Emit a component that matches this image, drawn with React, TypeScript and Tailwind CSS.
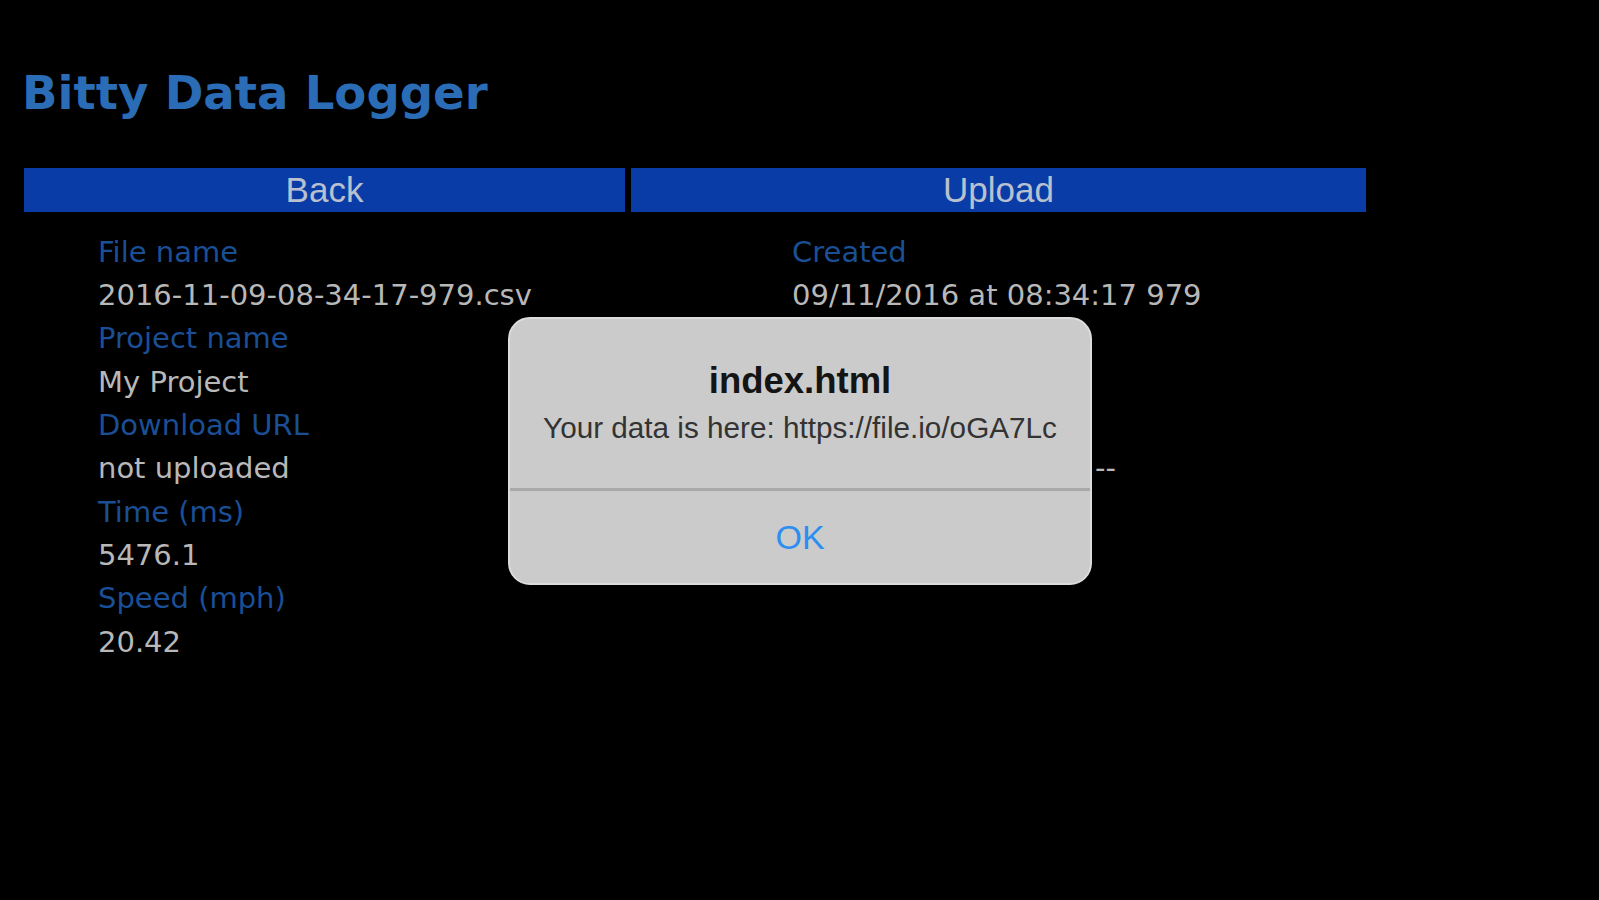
import React from "react";

const sans = { fontFamily: '"DejaVu Sans", Verdana, sans-serif' };

function Label({ children }: { children: React.ReactNode }) {
  return <div className="text-[#1a4f95] h-[43.35px] leading-[43.35px] whitespace-nowrap">{children}</div>;
}
function Value({ children }: { children: React.ReactNode }) {
  return <div className="text-[#b8b8b8] h-[43.35px] leading-[43.35px] whitespace-nowrap">{children}</div>;
}

export default function App() {
  return (
    <div className="relative w-full h-[900px] bg-black overflow-hidden" style={sans}>
      <div className="pl-[22px] pt-[70px]">
        <h1 className="text-[46.6px] h-[47px] leading-[47px] font-bold text-[#2a6cb6] font-['DejaVu_Sans',Verdana,sans-serif]">
          Bitty Data Logger
        </h1>
      </div>

      <div className="mt-[51px] ml-[24px] grid grid-cols-[601px_735px] gap-x-[6px] font-['Liberation_Sans',Arial,sans-serif]">
        <div className="h-[44px] bg-[#0a3ca8] text-[#b9c1cf] text-[35px] leading-[44px] text-center">Back</div>
        <div className="h-[44px] bg-[#0a3ca8] text-[#b9c1cf] text-[35px] leading-[44px] text-center">Upload</div>
      </div>

      <div className="mt-[18.6px] flex text-[29px]">
        <div className="w-[792px] pl-[98px] flex flex-col">
          <Label>File name</Label>
          <Value>2016-11-09-08-34-17-979.csv</Value>
          <Label>Project name</Label>
          <Value>My Project</Value>
          <Label>Download URL</Label>
          <Value>not uploaded</Value>
          <Label>Time (ms)</Label>
          <Value>5476.1</Value>
          <Label>Speed (mph)</Label>
          <Value>20.42</Value>
        </div>
        <div className="flex flex-col">
          <Label>Created</Label>
          <Value>09/11/2016 at 08:34:17 979</Value>
          <Label>&nbsp;</Label>
          <Value>&nbsp;</Value>
          <Label>&nbsp;</Label>
          <div className="text-[#b8b8b8] h-[43.35px] leading-[43.35px] w-[324px] flex justify-end">--</div>
        </div>
      </div>

      <div className="absolute left-[508px] top-[317px] w-[584px] h-[268px] rounded-[22px] bg-[#cbcbcb] border-2 border-[#dcdcdc] flex flex-col font-['Liberation_Sans',Arial,sans-serif]">
        <div className="pt-[42px] text-center text-[36.5px] leading-[40px] font-bold text-[#141414]">index.html</div>
        <div className="mt-[9px] text-center text-[29.7px] leading-[36px] text-[#333333]">
          Your data is here: https://file.io/oGA7Lc
        </div>
        <div className="mt-[42px] h-[3px] bg-[#a9a9a9]" />
        <div className="h-[92px] flex items-center justify-center text-[34px] text-[#2b8ef0]">OK</div>
      </div>
    </div>
  );
}
